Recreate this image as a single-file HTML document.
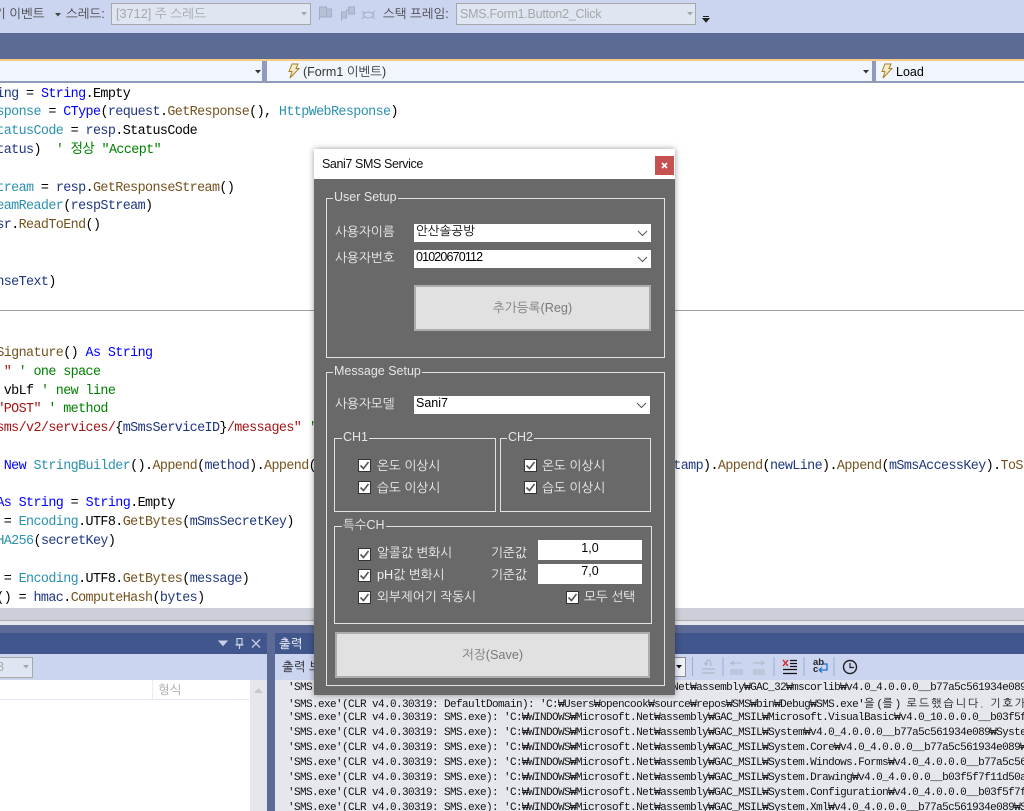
<!DOCTYPE html>
<html lang="ko"><head><meta charset="utf-8"><title>Sani7 SMS Service</title>
<style>
html,body{margin:0;padding:0;background:#fff}
#r{position:relative;width:1024px;height:811px;overflow:hidden;background:#fff;font-family:"Liberation Sans","NanumGothic","Noto Sans CJK KR",sans-serif}
.a,.t,.c,.o,.g,.lg,.cb{position:absolute}
.t{white-space:pre;line-height:20px;height:20px;font-size:12.5px}
.c{white-space:pre;left:-3.7px;font:13.4px/19px "Liberation Mono","Noto Sans CJK KR",monospace;letter-spacing:-.6px;color:#000;height:19px}
.k{color:#00f}.y{color:#2b91af}.m{color:#74531f}.s{color:#a31515}.g1{color:#008000}.l{color:#1f377f}
.o{white-space:pre;left:288px;font:11px/15px "Liberation Mono","NanumGothic",monospace;letter-spacing:-.6px;color:#111;height:15px}
.ko{font:11px/15px "NanumGothic","Noto Sans CJK KR",sans-serif;letter-spacing:1.9px}
.g{border:1px solid #e2e2e2;box-sizing:border-box}
.lg{background:#696969;color:#e6e6e6;font-size:12.5px;line-height:16px;height:16px;padding:0 1px;white-space:pre}
.w{color:#f0f0f0;font-size:12.7px}
.cmb{position:absolute;background:#fff;box-sizing:border-box;border:1px solid #7a7a7a;color:#000;font-size:12.5px;line-height:16px;padding-left:2px;white-space:pre}
.btn{position:absolute;background:#e1e1e1;box-sizing:border-box;border:2px solid #adadad;color:#7a7a7a;font-size:12.7px;text-align:center}
.cb{width:13px;height:13px}
</style></head><body><div id="r">

<!-- top toolbar -->
<div class="a" style="left:0;top:0;width:1024px;height:33px;background:#ccd5f0"></div>
<div class="t" style="left:-6px;top:4px;color:#444">기 이벤트</div>
<svg class="a" style="left:54px;top:12px" width="8" height="6"><path d="M1 1h6L4 4.500z" fill="#444"/></svg>
<div class="t" style="left:66px;top:4px;color:#444">스레드:</div>
<div class="a" style="left:111px;top:3px;width:200px;height:22px;background:#dfe6f1;border:1px solid #a8a8a8;box-sizing:border-box"></div>
<div class="t" style="left:116px;top:4px;color:#a6a6a6;font-size:12.7px">[3712] 주 스레드</div>
<svg class="a" style="left:300px;top:11px" width="8" height="6"><path d="M1 1h6L4 4.500z" fill="#a6a6a6"/></svg>
<svg class="a" style="left:318px;top:5px" width="60" height="18" fill="#b6bfd6" stroke="#a3adc6">
<path d="M1.500 15V2h7v10h-7M8.500 4h5v8h-5" fill="#b6bfd6"/>
<path d="M23.500 16V7h5v6h-5M30.500 2h6v7h-6zM28.500 7v-2h2" />
<path d="M45 10c3-4 8-4 11 0M45 10c3 4 8 4 11 0M44 6l3 3M44 14l3-3M57 6l-3 3M57 14l-3-3" fill="none"/>
</svg>
<div class="t" style="left:383px;top:4px;color:#444">스택 프레임:</div>
<div class="a" style="left:456px;top:3px;width:240px;height:22px;background:#dfe6f1;border:1px solid #a8a8a8;box-sizing:border-box"></div>
<div class="t" style="left:460px;top:4px;color:#a6a6a6;letter-spacing:-.26px">SMS.Form1.Button2_Click</div>
<svg class="a" style="left:686px;top:11px" width="8" height="6"><path d="M1 1h6L4 4.500z" fill="#a6a6a6"/></svg>
<svg class="a" style="left:702px;top:15px" width="8" height="9"><path d="M1 1.500h6M1 3.500h6L4 7z" stroke="#222" fill="#222" stroke-width="1"/></svg>

<!-- tab band -->
<div class="a" style="left:0;top:33px;width:1024px;height:26px;background:#5c6b96"></div>
<div class="a" style="left:0;top:59px;width:1024px;height:2px;background:#f5cc84"></div>
<div class="a" style="left:0;top:61px;width:1024px;height:22px;background:#8e9bbc"></div>
<div class="a" style="left:0;top:61px;width:262px;height:20px;background:#f1f5fd"></div>
<div class="a" style="left:267px;top:61px;width:605px;height:20px;background:#f1f5fd"></div>
<div class="a" style="left:876px;top:61px;width:148px;height:20px;background:#f1f5fd"></div>
<svg class="a" style="left:254px;top:69px" width="8" height="6"><path d="M1 1h6L4 4.500z" fill="#333"/></svg>
<svg class="a" style="left:862px;top:69px" width="8" height="6"><path d="M1 1h6L4 4.500z" fill="#333"/></svg>
<svg class="a" style="left:287px;top:63px" width="13" height="16"><path d="M5 1h6L9 5.500h3L3 15l2-6.500H2z" fill="#f4ecd2" stroke="#a8801f" stroke-width="1"/></svg>
<div class="t" style="left:303px;top:62px;color:#333;font-size:12.5px">(Form1 이벤트)</div>
<svg class="a" style="left:880px;top:63px" width="13" height="16"><path d="M5 1h6L9 5.500h3L3 15l2-6.500H2z" fill="#f4ecd2" stroke="#a8801f" stroke-width="1"/></svg>
<div class="t" style="left:896px;top:62px;color:#000;font-size:12.5px">Load</div>

<!-- code -->
<div class="c" style="top:85px"><span class="l">ing</span> = <span class="k">String</span>.Empty</div>
<div class="c" style="top:103px"><span class="y">sponse</span> = <span class="k">CType</span>(<span class="l">request</span>.<span class="m">GetResponse</span>(), <span class="y">HttpWebResponse</span>)</div>
<div class="c" style="top:122px"><span class="y">tatusCode</span> = <span class="l">resp</span>.StatusCode</div>
<div class="c" style="top:141px"><span class="l">tatus</span>)  <span class="g1">' 정상 "Accept"</span></div>
<div class="c" style="top:179px"><span class="y">tream</span> = <span class="l">resp</span>.<span class="m">GetResponseStream</span>()</div>
<div class="c" style="top:197px"><span class="y">eamReader</span>(<span class="l">respStream</span>)</div>
<div class="c" style="top:216px"><span class="l">sr</span>.<span class="m">ReadToEnd</span>()</div>
<div class="c" style="top:273px"><span class="l">nseText</span>)</div>
<div class="a" style="left:0;top:310px;width:1024px;height:1px;background:#a0a0a0"></div>
<div class="c" style="top:344px"><span class="m">Signature</span>() <span class="k">As</span> <span class="k">String</span></div>
<div class="c" style="top:363px"> <span class="s">"</span> <span class="g1">' one space</span></div>
<div class="c" style="top:382px"> vbLf <span class="g1">' new line</span></div>
<div class="c" style="top:400px"><span class="s">"POST"</span> <span class="g1">' method</span></div>
<div class="c" style="top:419px"><span class="s">sms/v2/services/</span>{<span class="l">mSmsServiceID</span>}<span class="s">/messages"</span> <span class="g1">'</span></div>
<div class="c" style="top:457px"> <span class="k">New</span> <span class="y">StringBuilder</span>().<span class="m">Append</span>(<span class="l">method</span>).<span class="m">Append</span>(</div>
<div class="c" style="top:457px;left:673.300px"><span class="l">tamp</span>).<span class="m">Append</span>(<span class="l">newLine</span>).<span class="m">Append</span>(<span class="l">mSmsAccessKey</span>).<span class="m">ToSt</span></div>
<div class="c" style="top:494px"><span class="k">As</span> <span class="k">String</span> = <span class="k">String</span>.Empty</div>
<div class="c" style="top:513px"> = <span class="y">Encoding</span>.UTF8.<span class="m">GetBytes</span>(<span class="l">mSmsSecretKey</span>)</div>
<div class="c" style="top:532px"><span class="y">HA256</span>(<span class="l">secretKey</span>)</div>
<div class="c" style="top:570px"> = <span class="y">Encoding</span>.UTF8.<span class="m">GetBytes</span>(<span class="l">message</span>)</div>
<div class="c" style="top:589px">() = <span class="l">hmac</span>.<span class="m">ComputeHash</span>(<span class="l">bytes</span>)</div>

<!-- bottom panels -->
<div class="a" style="left:0;top:608px;width:1024px;height:12px;background:#ccced8"></div>
<div class="a" style="left:0;top:620px;width:1024px;height:1px;background:#aaacb4"></div>
<div class="a" style="left:0;top:621px;width:1024px;height:4px;background:#e6e7ed"></div>
<div class="a" style="left:0;top:625px;width:1024px;height:186px;background:#5c6b96"></div>
<div class="a" style="left:0;top:633px;width:267px;height:21px;background:#40568d"></div>
<svg class="a" style="left:218px;top:638px" width="46" height="12" fill="none" stroke="#c8d0e4"><path d="M1 3h8L5 7.500z" fill="#c8d0e4"/><path d="M19 .500h5v6h-5zM17.500 7h8M21.500 7v4" stroke-width="1.200"/><path d="M34 1.500l8 8M42 1.500l-8 8" stroke-width="1.300"/></svg>
<div class="a" style="left:0;top:654px;width:267px;height:26px;background:#ccd5f0"></div>
<div class="a" style="left:-10px;top:657px;width:43px;height:21px;background:#dfe6f1;border:1px solid #a8a8a8;box-sizing:border-box"></div>
<div class="t" style="left:-3px;top:657px;color:#a6a6a6">8</div>
<svg class="a" style="left:22px;top:664px" width="8" height="6"><path d="M1 1h6L4 4.500z" fill="#a6a6a6"/></svg>
<div class="a" style="left:0;top:680px;width:250px;height:131px;background:#fff"></div>
<div class="a" style="left:0;top:699px;width:250px;height:1px;background:#e8eaf5"></div>
<div class="a" style="left:152px;top:680px;width:1px;height:19px;background:#e8eaf5"></div>
<div class="t" style="left:158px;top:680px;color:#a8a8a8">형식</div>
<div class="a" style="left:250px;top:680px;width:17px;height:131px;background:#e6e7ed"></div>
<svg class="a" style="left:253px;top:686px" width="12" height="8"><path d="M1 7h9L5.500 2z" fill="#c6c8d0"/></svg>

<div class="a" style="left:275px;top:633px;width:749px;height:21px;background:#40568d"></div>
<div class="t" style="left:279px;top:634px;color:#fff">출력</div>
<div class="a" style="left:275px;top:654px;width:749px;height:26px;background:#ccd5f0"></div>
<div class="t" style="left:282px;top:657px;color:#222">출력 보기 선택:</div>
<div class="a" style="left:660px;top:657px;width:26px;height:20px;background:#eef1f8;border:1px solid #8d8d8d;box-sizing:border-box"></div>
<svg class="a" style="left:675px;top:664px" width="8" height="6"><path d="M1 1h6L4 4.500z" fill="#111"/></svg>
<svg class="a" style="left:690px;top:656px" width="175" height="24" fill="none">
<path d="M2.500 1v19M33 1v19M84 1v19M114 1v19M144 1v19" stroke="#9fadcc" stroke-width="1"/>
<path d="M16 8c0-5 5-5 5 0v2M12 13h13M12 17h13" stroke="#aeb6c6" stroke-width="1.200"/>
<path d="M14 7l2 2 2-2" stroke="#aeb6c6"/>
<path d="M52 7h-11l3-2M41 7l3 2M40 14h13M40 16h13M40 18h13" stroke="#aeb6c6" stroke-width="1"/>
<path d="M63 7h11l-3-2M74 7l-3 2M63 14h12M63 16h12M63 18h12" stroke="#aeb6c6" stroke-width="1"/>
<path d="M93 4l5 6M98 4l-5 6" stroke="#d13438" stroke-width="1.500"/>
<path d="M100 4.500h7M100 7.500h7M100 10.500h7M93 13.500h14M93 17.500h14" stroke="#111" stroke-width="1.200"/>
<path d="M129 14h8v-6h-4M129 14l3-2.500M129 14l3 2.500" stroke="#1e72c8" stroke-width="1.300"/>
<circle cx="160" cy="11" r="6.500" stroke="#222" stroke-width="1.400"/><path d="M160 7v4.500h4" stroke="#222" stroke-width="1.200"/>
</svg>
<div class="t" style="left:813px;top:656px;font-size:9.500px;line-height:13px;color:#222;font-weight:bold">ab</div>
<div class="t" style="left:813px;top:663px;font-size:9.500px;line-height:13px;color:#222;font-weight:bold">c</div>

<div class="a" style="left:275px;top:680px;width:749px;height:131px;background:#e6e7ed;overflow:hidden"></div>
<div class="o" style="top:681px">'SMS.exe'(CLR v4.0.30319: DefaultDomain): 'C:₩WINDOWS₩Microsoft.Net₩assembly₩GAC_32₩mscorlib₩v4.0_4.0.0.0__b77a5c561934e089₩mscorlib.dll'</div>
<div class="o" style="top:696px">'SMS.exe'(CLR v4.0.30319: DefaultDomain): 'C:₩Users₩opencook₩source₩repos₩SMS₩bin₩Debug₩SMS.exe'<span class="ko">을</span>(<span class="ko">를</span>) <span class="ko">로드했습니다. 기호가</span></div>
<div class="o" style="top:711px">'SMS.exe'(CLR v4.0.30319: SMS.exe): 'C:₩WINDOWS₩Microsoft.Net₩assembly₩GAC_MSIL₩Microsoft.VisualBasic₩v4.0_10.0.0.0__b03f5f7f11d50a3a</div>
<div class="o" style="top:726px">'SMS.exe'(CLR v4.0.30319: SMS.exe): 'C:₩WINDOWS₩Microsoft.Net₩assembly₩GAC_MSIL₩System₩v4.0_4.0.0.0__b77a5c561934e089₩System.dll'</div>
<div class="o" style="top:741px">'SMS.exe'(CLR v4.0.30319: SMS.exe): 'C:₩WINDOWS₩Microsoft.Net₩assembly₩GAC_MSIL₩System.Core₩v4.0_4.0.0.0__b77a5c561934e089₩System</div>
<div class="o" style="top:756px">'SMS.exe'(CLR v4.0.30319: SMS.exe): 'C:₩WINDOWS₩Microsoft.Net₩assembly₩GAC_MSIL₩System.Windows.Forms₩v4.0_4.0.0.0__b77a5c561934e089</div>
<div class="o" style="top:771px">'SMS.exe'(CLR v4.0.30319: SMS.exe): 'C:₩WINDOWS₩Microsoft.Net₩assembly₩GAC_MSIL₩System.Drawing₩v4.0_4.0.0.0__b03f5f7f11d50a3a₩System</div>
<div class="o" style="top:786px">'SMS.exe'(CLR v4.0.30319: SMS.exe): 'C:₩WINDOWS₩Microsoft.Net₩assembly₩GAC_MSIL₩System.Configuration₩v4.0_4.0.0.0__b03f5f7f11d50a3a</div>
<div class="o" style="top:801px">'SMS.exe'(CLR v4.0.30319: SMS.exe): 'C:₩WINDOWS₩Microsoft.Net₩assembly₩GAC_MSIL₩System.Xml₩v4.0_4.0.0.0__b77a5c561934e089₩System.Xml</div>

<!-- dialog -->
<div class="a" style="left:314px;top:149px;width:361px;height:546px;background:#696969;box-shadow:0 0 6px rgba(0,0,0,.4)"></div>
<div class="a" style="left:314px;top:149px;width:361px;height:30px;background:#fff"></div>
<div class="t" style="left:322px;top:154px;color:#111;letter-spacing:-.4px">Sani7 SMS Service</div>
<div class="a" style="left:655px;top:156px;width:19px;height:19px;background:#c75050"></div>
<svg class="a" style="left:655px;top:156px" width="19" height="19"><path d="M7 7l5 5M12 7l-5 5" stroke="#fff" stroke-width="1.600"/></svg>

<div class="g" style="position:absolute;left:326px;top:198px;width:339px;height:160px"></div>
<div class="lg" style="left:333px;top:189px">User Setup</div>
<div class="t w" style="left:335px;top:222px">사용자이름</div>
<div class="cmb" style="left:414px;top:224px;width:237px;height:18px;border:0;line-height:15px">안산솔공방</div>
<svg class="a" style="left:637px;top:229px" width="12" height="9" fill="none"><path d="M1 2l4.500 4.500L10 2" stroke="#555" stroke-width="1"/></svg>
<div class="t w" style="left:335px;top:248px">사용자번호</div>
<div class="cmb" style="left:414px;top:250px;width:237px;height:18px;border:0;line-height:15px;letter-spacing:-.85px">01020670112</div>
<svg class="a" style="left:637px;top:255px" width="12" height="9" fill="none"><path d="M1 2l4.500 4.500L10 2" stroke="#555" stroke-width="1"/></svg>
<div class="btn" style="left:414px;top:285px;width:237px;height:46px;line-height:42px">추가등록(Reg)</div>

<div class="g" style="position:absolute;left:326px;top:372px;width:339px;height:314px"></div>
<div class="lg" style="left:333px;top:363px">Message Setup</div>
<div class="t w" style="left:335px;top:394px">사용자모델</div>
<div class="cmb" style="left:414px;top:396px;width:236px;height:18px;border:0;line-height:15px">Sani7</div>
<svg class="a" style="left:636px;top:401px" width="12" height="9" fill="none"><path d="M1 2l4.500 4.500L10 2" stroke="#555" stroke-width="1"/></svg>

<div class="g" style="position:absolute;left:334px;top:438px;width:162px;height:74px"></div>
<div class="lg" style="left:342px;top:429px">CH1</div>
<div class="g" style="position:absolute;left:500px;top:438px;width:151px;height:74px"></div>
<div class="lg" style="left:507px;top:429px">CH2</div>
<div class="g" style="position:absolute;left:334px;top:526px;width:318px;height:98px"></div>
<div class="lg" style="left:342px;top:517px">특수CH</div>

<svg width="0" height="0" style="position:absolute"><symbol id="ck" viewBox="0 0 13 13"><rect x=".5" y=".5" width="12" height="12" fill="#fff" stroke="#333"/><path d="M2.500 6.500l3 3 5-6.500" fill="none" stroke="#555" stroke-width="1.600"/></symbol></svg>

<svg class="cb" style="left:358px;top:459px"><use href="#ck"/></svg><div class="t w" style="left:377px;top:456px">온도 이상시</div>
<svg class="cb" style="left:358px;top:481px"><use href="#ck"/></svg><div class="t w" style="left:377px;top:478px">습도 이상시</div>
<svg class="cb" style="left:524px;top:459px"><use href="#ck"/></svg><div class="t w" style="left:542px;top:456px">온도 이상시</div>
<svg class="cb" style="left:524px;top:481px"><use href="#ck"/></svg><div class="t w" style="left:542px;top:478px">습도 이상시</div>

<svg class="cb" style="left:358px;top:548px"><use href="#ck"/></svg><div class="t w" style="left:377px;top:543px">알콜값 변화시</div>
<svg class="cb" style="left:358px;top:569px"><use href="#ck"/></svg><div class="t w" style="left:377px;top:565px">pH값 변화시</div>
<svg class="cb" style="left:358px;top:591px"><use href="#ck"/></svg><div class="t w" style="left:377px;top:587px">외부제어기 작동시</div>
<div class="t w" style="left:491px;top:543px">기준값</div>
<div class="t w" style="left:491px;top:565px">기준값</div>
<div class="cmb" style="left:538px;top:540px;width:104px;height:20px;text-align:center;padding:0;line-height:16px;border:0">1,0</div>
<div class="cmb" style="left:538px;top:564px;width:104px;height:20px;text-align:center;padding:0;line-height:15px;border:0">7,0</div>
<svg class="cb" style="left:566px;top:591px"><use href="#ck"/></svg><div class="t w" style="left:584px;top:587px">모두 선택</div>

<div class="btn" style="left:335px;top:632px;width:315px;height:46px;line-height:42px">저장(Save)</div>
</div></body></html>
